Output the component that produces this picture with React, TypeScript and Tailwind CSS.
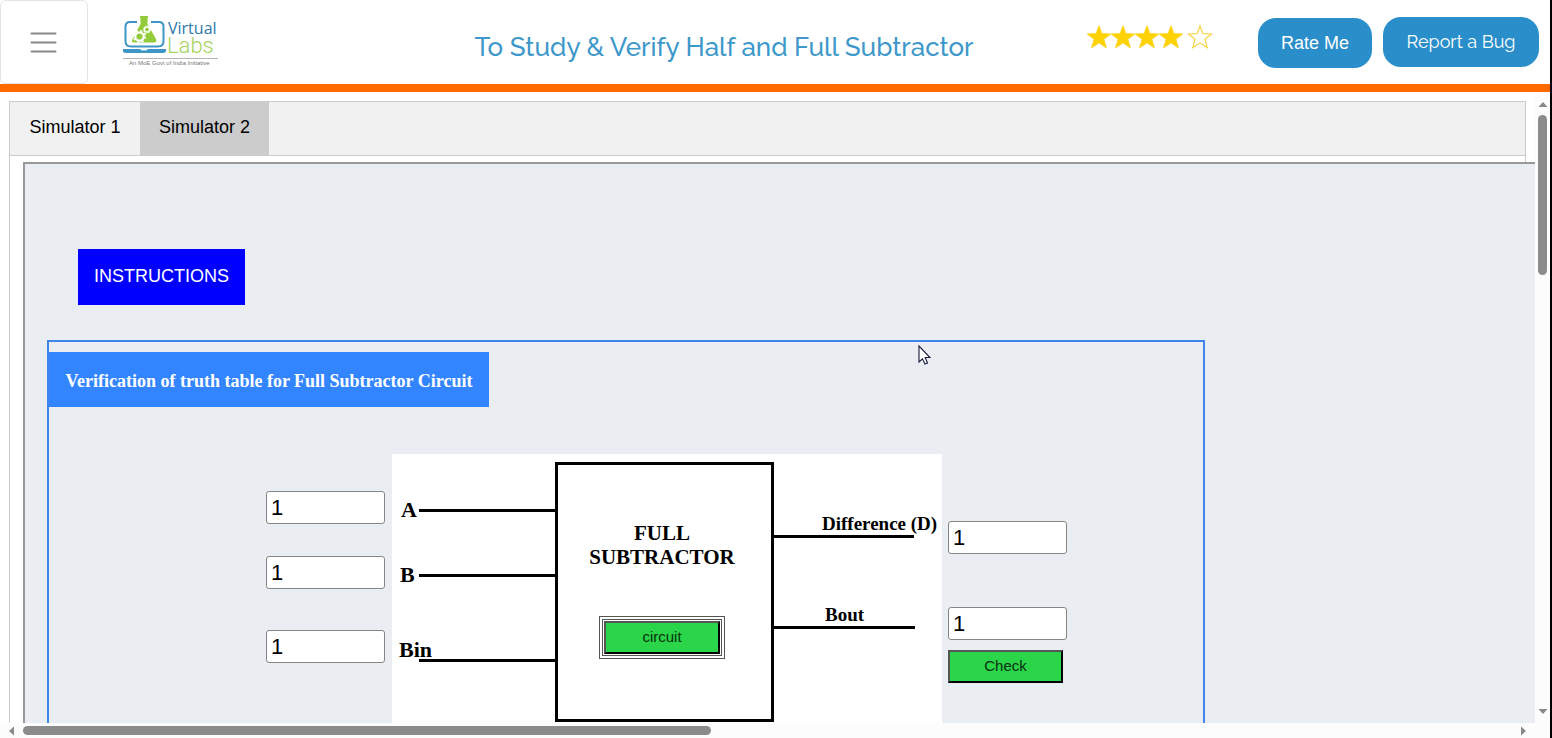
import { useState } from "react";

const STAR =
  "M12 0.8 L14.9 8.6 L23.8 9 L16.9 14.2 L19.4 22.8 L12 17.9 L4.6 22.8 L7.1 14.2 L0.2 9 L9.1 8.6 Z";

function Star({ filled }: { filled: boolean }) {
  return (
    <svg viewBox="0 0 24 24" className="h-6 w-6" aria-hidden="true">
      {filled ? (
        <path d={STAR} fill="#ffd203" stroke="#fdd62c" strokeWidth="1" />
      ) : (
        <path d={STAR} fill="#fff" stroke="#fbd23c" strokeWidth="1.1" />
      )}
    </svg>
  );
}

function Logo() {
  return (
    <svg viewBox="0 0 96 52" className="h-[52px] w-24" role="img" aria-label="Virtual Labs">
      <path
        d="M14 6 H7 Q2.5 6 2.5 10.500 V25 Q2.5 30.500 8 30.500 H35 Q40.500 30.500 40.500 25 V10.500 Q40.500 6 36 6 H28"
        fill="none"
        stroke="#3f96c6"
        strokeWidth="2"
      />
      <path d="M0 33 H17 Q18 34.500 21 34.500 Q24 34.500 25 33 H43 V34.500 Q43 37 40 37 H3 Q0 37 0 34.500 Z" fill="#3f96c6" />
      <path d="M17 0 H25 V2 H24.500 V8 L33 23 Q34 26.500 31 26.500 H11 Q8 26.500 9.500 23 L17.500 8 V2 H17 Z" fill="#93cb3b" />
      <circle cx="16.500" cy="20.500" r="4.200" fill="#93cb3b" stroke="#fff" strokeWidth="2.200" />
      <circle cx="16.500" cy="20.500" r="5.800" fill="none" stroke="#fff" strokeWidth="1.600" strokeDasharray="2.200 2.355" />
      <circle cx="24" cy="13.500" r="2.600" fill="#93cb3b" stroke="#fff" strokeWidth="1.500" />
      <circle cx="24" cy="13.500" r="3.600" fill="none" stroke="#fff" strokeWidth="1" strokeDasharray="1.400 1.427" />
      <text x="45" y="18" fontFamily="Open Sans, sans-serif" fontSize="16" fontWeight="500" fill="#2b78ab">Virtual</text>
      <text x="44" y="37" fontFamily="Roboto, sans-serif" fontSize="22" fontWeight="300" fill="#a5d35c">Labs</text>
      <path d="M0 42.500 H95" stroke="#b5b5b5" />
      <text x="6" y="49" fontFamily="Liberation Sans, sans-serif" fontSize="6" fill="#777">An MoE Govt of India Initiative</text>
    </svg>
  );
}

function Header() {
  return (
    <header className="flex h-[92px] shrink-0 items-start border-b-8 border-[#ff6a00] bg-white">
      <button
        type="button"
        aria-label="Open menu"
        className="flex h-[84px] w-[88px] shrink-0 items-center justify-center rounded-md border border-[#e4e4e4]"
      >
        <svg viewBox="0 0 28 22" className="h-[22px] w-7" aria-hidden="true">
          <path d="M1.500 2.500 H25.500 M1.500 11.500 H25.500 M1.500 20.500 H25.500" stroke="#888" strokeWidth="2" strokeLinecap="round" />
        </svg>
      </button>
      <a href="#home" className="ml-[35px] mt-4 shrink-0">
        <Logo />
      </a>
      <h1 className="mt-[29px] flex-1 pl-[142px] text-center font-['Raleway','Lato',sans-serif] text-[26px] leading-9 font-medium whitespace-nowrap text-[#3e98ca]">
        To Study &amp; Verify Half and Full Subtractor
      </h1>
      <div className="mt-[25px] flex w-[125px] shrink-0 justify-between" role="img" aria-label="4 out of 5 stars">
        <div className="flex">
          <Star filled />
          <Star filled />
          <Star filled />
          <Star filled />
        </div>
        <Star filled={false} />
      </div>
      <button
        type="button"
        className="mt-[18px] ml-[46px] h-[50px] w-[114px] shrink-0 rounded-[18px] bg-[#298ec9] font-['Liberation_Sans',sans-serif] text-lg text-white"
      >
        Rate Me
      </button>
      <button
        type="button"
        className="mt-[17px] mr-[11px] ml-[11px] h-[50px] w-[156px] shrink-0 rounded-[18px] bg-[#298ec9] font-['Raleway','Lato',sans-serif] text-lg text-white"
      >
        Report a Bug
      </button>
    </header>
  );
}

function BitInput({ label, className }: { label: string; className?: string }) {
  const [value, setValue] = useState("1");
  return (
    <input
      aria-label={label}
      value={value}
      onChange={(e) => setValue(e.target.value)}
      className={
        "block h-[33px] w-[119px] rounded-[3px] border border-[#858585] bg-white px-1 font-['Liberation_Sans',sans-serif] text-[22px] leading-7 text-black " +
        (className ?? "")
      }
    />
  );
}

const LABEL = "Liberation Serif, serif";

function Circuit() {
  return (
    <div className="flex h-[300px] w-[550px] shrink-0 bg-white">
      <svg viewBox="0 0 163 300" className="h-[300px] w-[163px]" aria-hidden="true">
        <path d="M27 56.500 H163 M27 121.500 H163 M27 206.500 H163" stroke="#000" strokeWidth="3" />
        <g fontFamily={LABEL} fontWeight="700" fontSize="22">
          <text x="9" y="63">A</text>
          <text x="8" y="128">B</text>
          <text x="7" y="203">Bin</text>
        </g>
      </svg>
      <div className="mt-2 flex h-[260px] w-[219px] flex-col items-center border-3 border-black pt-14 pr-[5px] font-['Liberation_Serif',serif]">
        <p className="text-center text-[21px] leading-6 font-bold">
          FULL
          <br />
          SUBTRACTOR
        </p>
        <div className="mt-[47px] border-4 border-double border-[#555] p-px">
          <button
            type="button"
            className="block h-[33px] w-[116px] border-2 border-t-[#555] border-r-black border-b-black border-l-[#555] bg-[#2ad549] font-['Liberation_Sans',sans-serif] text-[15px] text-[#06310f]"
          >
            circuit
          </button>
        </div>
      </div>
      <svg viewBox="0 0 168 300" className="h-[300px] w-[168px]" aria-hidden="true">
        <path d="M0 82.500 H140 M0 173.500 H141" stroke="#000" strokeWidth="3" />
        <g fontFamily={LABEL} fontWeight="700" fontSize="19">
          <text x="48" y="76">Difference (D)</text>
          <text x="51" y="167">Bout</text>
        </g>
      </svg>
    </div>
  );
}

function Simulator() {
  return (
    <main className="-mr-10 h-[1600px] border-2 border-[#999] bg-[#eaeef3] pt-[85px] pl-[22px]">
      <button
        type="button"
        className="ml-[31px] block h-[56px] w-[167px] bg-[#0000ff] pb-[3px] font-['Liberation_Sans',sans-serif] text-lg text-white"
      >
        INSTRUCTIONS
      </button>
      <section className="mt-[35px] h-[1000px] w-full max-w-[1158px] border-2 border-[#3f86ea] pt-[10px]">
        <h2 className="flex h-[55px] w-[440px] items-center justify-center bg-[#3385ff] pt-[3px] font-['Liberation_Serif',serif] text-[18px] font-bold whitespace-nowrap text-white">
          Verification of truth table for Full Subtractor Circuit
        </h2>
        <div className="mt-[47px] ml-[217px] flex items-start">
          <div className="mr-[7px] pt-[37px]">
            <BitInput label="A" />
            <BitInput label="B" className="mt-8" />
            <BitInput label="Bin" className="mt-[41px]" />
          </div>
          <Circuit />
          <div className="ml-[6px] pt-[67px]">
            <BitInput label="Difference (D)" />
            <BitInput label="Bout" className="mt-[53px]" />
            <button
              type="button"
              className="mt-[10px] block h-[33px] w-[115px] border-2 border-t-[#555] border-r-black border-b-black border-l-[#555] bg-[#2ad549] font-['Liberation_Sans',sans-serif] text-[15px] text-[#06310f]"
            >
              Check
            </button>
          </div>
        </div>
      </section>
    </main>
  );
}

function Arrow({ d }: { d: string }) {
  return (
    <svg viewBox="0 0 10 10" className="h-[10px] w-[10px] shrink-0" aria-hidden="true">
      <path d={d} fill="#898989" />
    </svg>
  );
}

export default function App() {
  return (
    <div className="relative flex h-screen flex-col overflow-hidden border-r-2 border-black bg-white text-black">
      <Header />
      <div className="flex min-h-0 flex-1">
        <div className="flex min-w-0 flex-1 flex-col">
          <div className="min-h-0 flex-1 overflow-hidden">
            <div className="mr-[9px] ml-[9px] pt-[9px]">
              <nav className="flex h-[55px] border border-[#ccc] bg-[#f1f1f1] font-['Liberation_Sans',sans-serif] text-[18px]">
                <button type="button" className="w-[130px] pb-[3px]">
                  Simulator 1
                </button>
                <button type="button" className="w-[129px] bg-[#ccc] pb-[3px]">
                  Simulator 2
                </button>
              </nav>
              <div className="border-x border-[#ccc] pt-[6px] pl-[13px]">
                <Simulator />
              </div>
            </div>
          </div>
          <div className="flex h-[15px] shrink-0 items-center gap-[7px] bg-[#fcfcfc] pr-[6px] pl-[6px]">
            <Arrow d="M8 0.500 V9.500 L3 5 Z" />
            <div className="h-[9px] flex-1">
              <div className="h-[9px] w-[46.2%] rounded-full bg-[#8b8b8b]" />
            </div>
            <Arrow d="M2 0.500 V9.500 L7 5 Z" />
          </div>
        </div>
        <div className="flex w-[15px] shrink-0 flex-col items-center bg-[#fcfcfc] pt-2 pb-[22px]">
          <Arrow d="M0.500 7 H9.500 L5 2 Z" />
          <div className="mt-[5px] min-h-0 w-[9px] flex-1">
            <div className="h-[27%] w-[9px] rounded-full bg-[#8b8b8b]" />
          </div>
          <Arrow d="M0.500 3 H9.500 L5 8 Z" />
        </div>
      </div>
      <svg viewBox="0 0 13 20" className="pointer-events-none absolute top-[345px] left-[918px] h-5 w-[13px]" aria-hidden="true">
        <path d="M1 1 V17 L4.500 13.800 L7 19 L9.500 18 L7.200 12.500 H12 Z" fill="#fff" stroke="#16183a" strokeWidth="1.100" />
      </svg>
    </div>
  );
}
